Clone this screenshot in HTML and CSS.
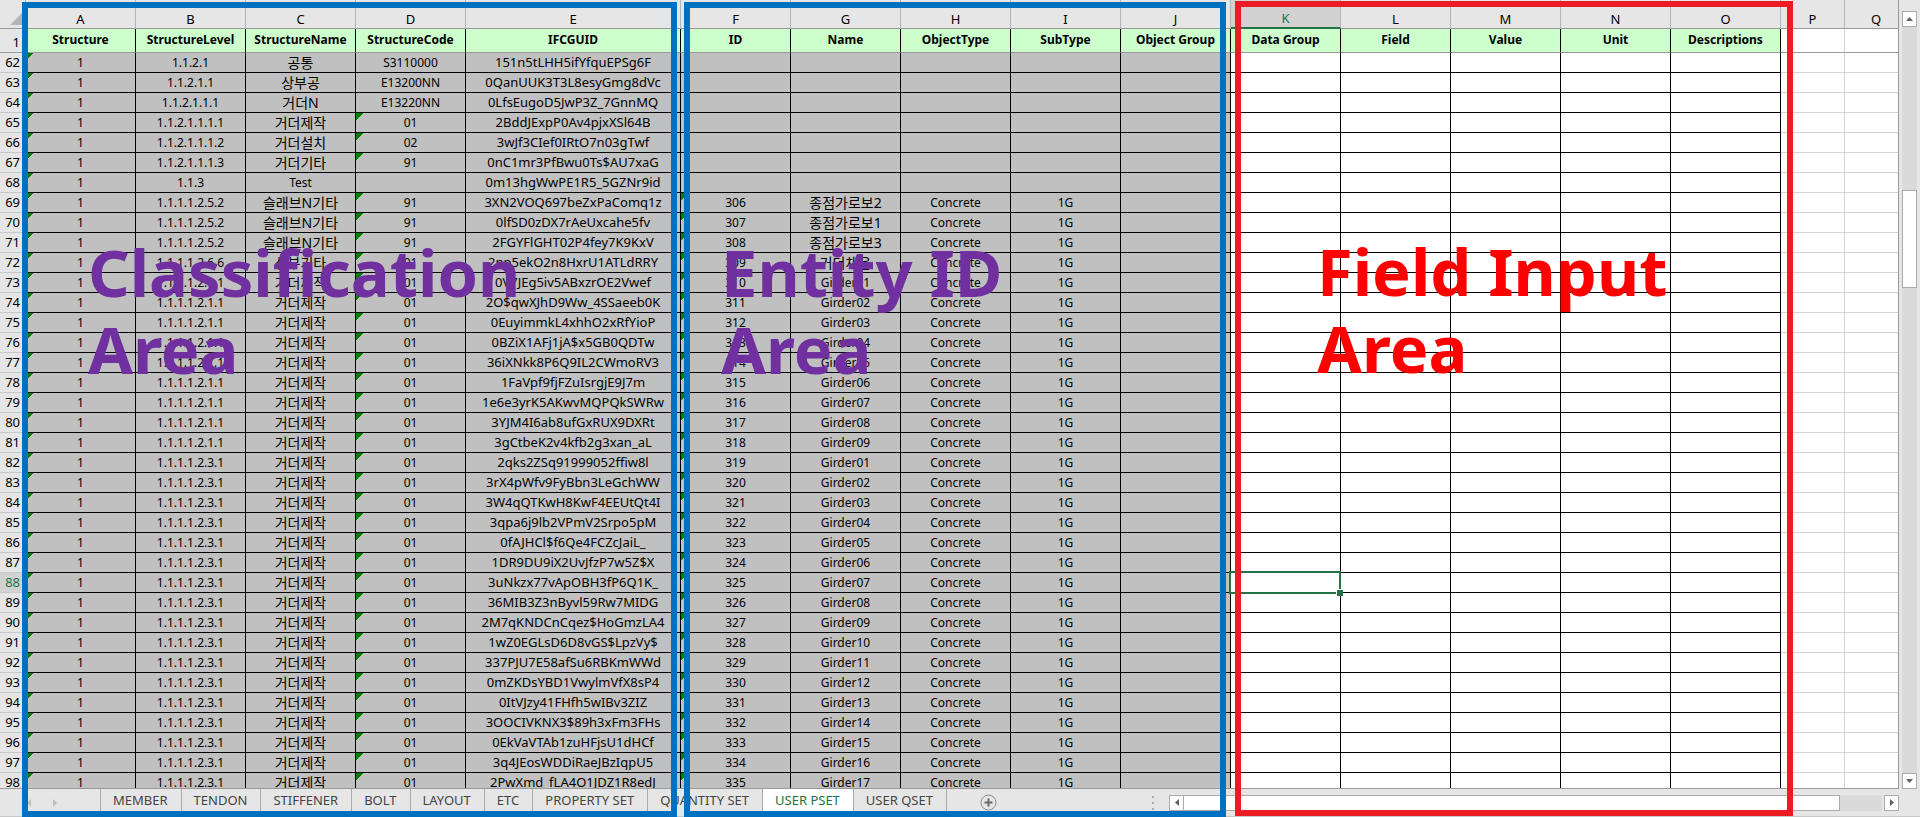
FILE: index.html
```
<!DOCTYPE html>
<html lang="ko">
<head>
    <meta charset="UTF-8">
    <meta name="viewport" content="width=device-width, initial-scale=1.0">
    <title>USER PSET</title>
    <link rel="stylesheet" href="styles.css">
</head>
<body>

<div class="sheet">
    <div class="main">
        <div class="grid-wrap">
            <table class="grid">
                <colgroup id="grid-cols"></colgroup>
                <thead id="grid-head"></thead>
                <tbody id="grid-body"></tbody>
            </table>
        </div>
        <div class="vscroll">
            <button class="scroll-btn" aria-label="Scroll up"><svg width="7" height="4"><path d="M0 4L3.5 0L7 4z"/></svg></button>
            <div class="vtrack"><div class="vthumb"></div></div>
            <button class="scroll-btn" aria-label="Scroll down"><svg width="7" height="4"><path d="M0 0L3.5 4L7 0z"/></svg></button>
        </div>
    </div>

    <div class="bottom-bar">
        <div class="tab-nav">
            <button class="nav-btn" aria-label="Previous sheet"><svg width="4" height="8"><path d="M4 0L0 4L4 8z"/></svg></button>
            <button class="nav-btn" aria-label="Next sheet"><svg width="4" height="8"><path d="M0 0L4 4L0 8z"/></svg></button>
        </div>
        <div class="tabs">
            <button class="tab">MEMBER</button>
            <button class="tab">TENDON</button>
            <button class="tab">STIFFENER</button>
            <button class="tab">BOLT</button>
            <button class="tab">LAYOUT</button>
            <button class="tab">ETC</button>
            <button class="tab">PROPERTY SET</button>
            <button class="tab">QUANTITY SET</button>
            <button class="tab active">USER PSET</button>
            <button class="tab">USER QSET</button>
        </div>
        <button class="add-btn" aria-label="New sheet">
            <svg width="17" height="17" viewBox="0 0 17 17">
                <circle cx="8.5" cy="8.5" r="7.5" fill="none" stroke="#8a8a8a"/>
                <path d="M4.5 7.5h3v-3h2v3h3v2h-3v3h-2v-3h-3z" fill="#6a6a6a"/>
            </svg>
        </button>
        <div class="splitter"><i></i><i></i><i></i></div>
        <div class="hscroll">
            <button class="scroll-btn" aria-label="Scroll left"><svg width="4" height="7"><path d="M4 0L0 3.5L4 7z"/></svg></button>
            <div class="htrack"><div class="hthumb"></div></div>
            <button class="scroll-btn" aria-label="Scroll right"><svg width="4" height="7"><path d="M0 0L4 3.5L0 7z"/></svg></button>
        </div>
    </div>

    <!-- Area callouts -->
    <div class="area area-class">Classification<br>Area</div>
    <div class="area area-entity">Entity ID<br>Area</div>
    <div class="area area-field">Field Input<br>Area</div>
</div>

<script src="script.js"></script>

</body>
</html>
```
FILE: styles.css
```
:root {
    --chrome: #e6e6e6;
    --line: #999999;
    --gridline: #d4d4d4;
    --locked: #c0c0c0;
    --head: #ccffcc;
    --green: #217346;
    --blue: #0070c0;
    --purple: #7030a0;
}
* { box-sizing: border-box; }
body {
    margin: 0;
    background-color: var(--chrome);
    color: #000;
    font-family: "Noto Sans", "Noto Sans CJK KR", sans-serif;
    font-size: 12px;
}
button {
    font: inherit;
    color: inherit;
    padding: 0;
    border: 0;
    background: none;
}
.sheet {
    position: relative;
    display: flex;
    flex-direction: column;
    height: 100vh;
    overflow: hidden;
}
.main {
    display: flex;
    flex: 1;
    min-height: 0;
}

/* Grid */
.grid-wrap {
    flex: 1;
    min-width: 0;
    overflow: hidden;
    background-color: #fff;
    border-right: 1px solid var(--line);
    border-bottom: 1px solid var(--line);
}
.grid {
    width: calc(100% + 10px);
    table-layout: fixed;
    border-collapse: separate;
    border-spacing: 0;
}
.grid th, .grid td {
    height: 20px;
    padding: 0;
    line-height: 19px;
    text-align: center;
    white-space: nowrap;
    overflow: hidden;
    border-right: 1px solid #000;
    border-bottom: 1px solid #000;
}
.grid th { font-weight: normal; }
.grid .letters th {
    height: 29px;
    padding-top: 10px;
    line-height: 17px;
    font-size: 13px;
    background-color: var(--chrome);
    border-right: 1px solid #b4b4b4;
    border-bottom: 1px solid var(--line);
}
.grid .letters .current {
    color: var(--green);
    background-color: #d2d2d2;
    border-bottom: 2px solid var(--green);
}
.grid .corner svg {
    display: block;
    margin-left: 10px;
    fill: #b4b4b4;
}
.grid .names td {
    height: 24px;
    line-height: 21px;
    padding-bottom: 2px;
    font-weight: bold;
    background-color: var(--head);
    border-bottom: 1px solid var(--line);
}
.grid .rownum {
    padding-right: 5px;
    font-size: 13px;
    text-align: right;
    background-color: var(--chrome);
    border-right: 1px solid var(--line);
    border-bottom: 1px solid #c8c8c8;
}
.grid .names .rownum {
    padding-top: 4px;
    border-bottom: 1px solid var(--line);
}
.grid .rownum.current {
    color: var(--green);
    background-color: #d2d2d2;
}
.grid .locked { background-color: var(--locked); }
.grid .guid { font-size: 13px; }
.grid .korean { font-size: 14px; }
.grid .flag {
    background-image: linear-gradient(135deg, #008000 5px, transparent 5px);
}
.grid td.plain, .grid .names td.plain {
    background-color: #fff;
    border-right: 1px solid var(--gridline);
}
.grid td.plain { border-bottom: 1px solid var(--gridline); }
.grid .names td.plain { border-bottom: 1px solid var(--line); }
.grid .selected {
    position: relative;
    overflow: visible;
}
.cursor {
    position: absolute;
    top: -2px;
    right: -1px;
    bottom: -2px;
    left: -2px;
    border: 2px solid var(--green);
}
.cursor::after {
    content: "";
    position: absolute;
    right: -4px;
    bottom: -4px;
    width: 6px;
    height: 6px;
    background-color: var(--green);
    border: 1px solid #fff;
    border-width: 1px 0 0 1px;
}

/* Scroll bars */
.scroll-btn {
    display: flex;
    align-items: center;
    justify-content: center;
    flex: none;
    width: 15px;
    height: 16px;
    background-color: #fff;
    border: 1px solid #ababab;
}
.scroll-btn svg { fill: #606060; }
.vscroll {
    display: flex;
    flex-direction: column;
    width: 21px;
    padding: 11px 3px 0 3px;
}
.vtrack {
    flex: 1;
    width: 15px;
    padding-top: 163px;
    background-color: #dadada;
}
.vthumb {
    height: 98px;
    background-color: #fff;
    border: 1px solid #ababab;
}

/* Sheet tabs */
.bottom-bar {
    display: flex;
    align-items: center;
    height: 28px;
    padding-right: 21px;
    border-bottom: 1px solid #c8c8c8;
}
.tab-nav {
    display: flex;
    gap: 22px;
    width: 100px;
    padding-left: 27px;
}
.nav-btn svg {
    display: block;
    fill: #bdbdbd;
}
.tabs {
    display: flex;
    align-self: stretch;
    border-left: 1px solid #ababab;
}
.tab {
    padding: 0 13px 5px 12px;
    font-size: 13px;
    color: #444;
    border-right: 1px solid #ababab;
}
.tab.active {
    color: var(--green);
    background-color: #fff;
}
.add-btn { margin-left: 33px; }
.add-btn svg { display: block; }
.splitter {
    display: flex;
    flex-direction: column;
    gap: 4px;
    margin-left: auto;
    margin-right: 15px;
}
.splitter i {
    width: 2px;
    height: 2px;
    background-color: #ababab;
}
.hscroll {
    display: flex;
    width: calc(38% + 8px);
}
.htrack {
    flex: 1;
    margin-right: 2px;
    background-color: #dadada;
}
.hthumb {
    width: 94%;
    height: 16px;
    background-color: #fff;
    border: 1px solid #ababab;
    border-left: 0;
}

/* Area callouts */
.area {
    position: absolute;
    top: 2px;
    bottom: 0;
    padding-top: 226px;
    border: 6px solid var(--blue);
    color: var(--purple);
    font-size: 65px;
    font-weight: bold;
    line-height: 77px;
    white-space: nowrap;
    pointer-events: none;
}
.area-class {
    left: 22px;
    width: 655px;
    padding-left: 60px;
}
.area-entity {
    left: 684px;
    width: 542px;
    padding-left: 31px;
}
.area-field {
    top: 1px;
    bottom: 1px;
    left: 1235px;
    width: 558px;
    padding-left: 76px;
    border-color: #ed1c24;
    color: #ff0000;
}
```
FILE: script.js
```
const letters = 'ABCDEFGHIJKLMNOPQ'.split('');
const widths = [26, 110, 110, 110, 110, 215, 110, 110, 110, 110, 110, 110, 110, 110, 110, 110, 64];
const names = ['Structure', 'StructureLevel', 'StructureName', 'StructureCode', 'IFCGUID',
    'ID', 'Name', 'ObjectType', 'SubType', 'Object Group',
    'Data Group', 'Field', 'Value', 'Unit', 'Descriptions', '', ''];
const firstRow = 62;
const currentRow = 88;

// level, name, code, guid, id, entity name
const rows = [
    ['1.1.2.1', '공통', 'S3110000', '151n5tLHH5ifYfquEPSg6F'],
    ['1.1.2.1.1', '상부공', 'E13200NN', '0QanUUK3T3L8esyGmg8dVc'],
    ['1.1.2.1.1.1', '거더N', 'E13220NN', '0LfsEugoD5JwP3Z_7GnnMQ'],
    ['1.1.2.1.1.1.1', '거더제작', '01', '2BddJExpP0Av4pjxXSl64B'],
    ['1.1.2.1.1.1.2', '거더설치', '02', '3wJf3CIef0IRtO7n03gTwf'],
    ['1.1.2.1.1.1.3', '거더기타', '91', '0nC1mr3PfBwu0Ts$AU7xaG'],
    ['1.1.3', 'Test', '', '0m13hgWwPE1R5_5GZNr9id'],
    ['1.1.1.1.2.5.2', '슬래브N기타', '91', '3XN2VOQ697beZxPaComq1z', '306', '종점가로보2'],
    ['1.1.1.1.2.5.2', '슬래브N기타', '91', '0lfSD0zDX7rAeUxcahe5fv', '307', '종점가로보1'],
    ['1.1.1.1.2.5.2', '슬래브N기타', '91', '2FGYFlGHT02P4fey7K9KxV', '308', '종점가로보3'],
    ['1.1.1.1.2.6.6', '상부기타', '91', '2np5ekO2n8HxrU1ATLdRRY', '309', '거더채움'],
    ['1.1.1.1.2.1.1', '거더제작', '01', '0V7JEg5iv5ABxzrOE2Vwef', '310', 'Girder01'],
    ['1.1.1.1.2.1.1', '거더제작', '01', '2O$qwXJhD9Ww_4SSaeeb0K', '311', 'Girder02'],
    ['1.1.1.1.2.1.1', '거더제작', '01', '0EuyimmkL4xhhO2xRfYioP', '312', 'Girder03'],
    ['1.1.1.1.2.1.1', '거더제작', '01', '0BZiX1AFj1jA$x5GB0QDTw', '313', 'Girder04'],
    ['1.1.1.1.2.1.1', '거더제작', '01', '36iXNkk8P6Q9IL2CWmoRV3', '314', 'Girder05'],
    ['1.1.1.1.2.1.1', '거더제작', '01', '1FaVpf9fjFZuIsrgjE9J7m', '315', 'Girder06'],
    ['1.1.1.1.2.1.1', '거더제작', '01', '1e6e3yrK5AKwvMQPQkSWRw', '316', 'Girder07'],
    ['1.1.1.1.2.1.1', '거더제작', '01', '3YJM4I6ab8ufGxRUX9DXRt', '317', 'Girder08'],
    ['1.1.1.1.2.1.1', '거더제작', '01', '3gCtbeK2v4kfb2g3xan_aL', '318', 'Girder09'],
    ['1.1.1.1.2.3.1', '거더제작', '01', '2qks2ZSq91999052ffiw8l', '319', 'Girder01'],
    ['1.1.1.1.2.3.1', '거더제작', '01', '3rX4pWfv9FyBbn3LeGchWW', '320', 'Girder02'],
    ['1.1.1.1.2.3.1', '거더제작', '01', '3W4qQTKwH8KwF4EEUtQt4I', '321', 'Girder03'],
    ['1.1.1.1.2.3.1', '거더제작', '01', '3qpa6j9lb2VPmV2Srpo5pM', '322', 'Girder04'],
    ['1.1.1.1.2.3.1', '거더제작', '01', '0fAJHCl$f6Qe4FCZcJaiL_', '323', 'Girder05'],
    ['1.1.1.1.2.3.1', '거더제작', '01', '1DR9DU9iX2UvJfzP7w5Z$X', '324', 'Girder06'],
    ['1.1.1.1.2.3.1', '거더제작', '01', '3uNkzx77vApOBH3fP6Q1K_', '325', 'Girder07'],
    ['1.1.1.1.2.3.1', '거더제작', '01', '36MIB3Z3nByvl59Rw7MIDG', '326', 'Girder08'],
    ['1.1.1.1.2.3.1', '거더제작', '01', '2M7qKNDCnCqez$HoGmzLA4', '327', 'Girder09'],
    ['1.1.1.1.2.3.1', '거더제작', '01', '1wZ0EGLsD6D8vGS$LpzVy$', '328', 'Girder10'],
    ['1.1.1.1.2.3.1', '거더제작', '01', '337PJU7E58afSu6RBKmWWd', '329', 'Girder11'],
    ['1.1.1.1.2.3.1', '거더제작', '01', '0mZKDsYBD1VwylmVfX8sP4', '330', 'Girder12'],
    ['1.1.1.1.2.3.1', '거더제작', '01', '0ItVJzy41FHfh5wIBv3ZIZ', '331', 'Girder13'],
    ['1.1.1.1.2.3.1', '거더제작', '01', '3OOCIVKNX3$89h3xFm3FHs', '332', 'Girder14'],
    ['1.1.1.1.2.3.1', '거더제작', '01', '0EkVaVTAb1zuHFjsU1dHCf', '333', 'Girder15'],
    ['1.1.1.1.2.3.1', '거더제작', '01', '3q4JEosWDDiRaeJBzIqpU5', '334', 'Girder16'],
    ['1.1.1.1.2.3.1', '거더제작', '01', '2PwXmd_fLA4O1JDZ1R8edJ', '335', 'Girder17']
];

function cellClass(col, text, rowNo) {
    const cls = [];
    if (col < 10) cls.push('locked');
    if (col > 14) cls.push('plain');
    if (col === 4) cls.push('guid');
    if (/[가-힣]/.test(text)) cls.push('korean');
    // numbers stored as text
    if (text && (col === 0 || col === 5 || (col === 3 && text.length === 2))) cls.push('flag');
    if (col === 10 && rowNo === currentRow) cls.push('selected');
    return cls.join(' ');
}

// last column has no width and takes what is left
document.getElementById('grid-cols').innerHTML =
    widths.map(w => `<col style="width: ${w}px">`).join('') + '<col>';

document.getElementById('grid-head').innerHTML = `
    <tr class="letters">
        <th class="corner"><svg width="12" height="12"><path d="M12 0V12H0z"/></svg></th>
        ${letters.map(l => `<th${l === 'K' ? ' class="current"' : ''}>${l}</th>`).join('')}
    </tr>
    <tr class="names">
        <th class="rownum">1</th>
        ${names.map((n, i) => `<td${i > 14 ? ' class="plain"' : ''}>${n}</td>`).join('')}
    </tr>`;

const body = document.getElementById('grid-body');
rows.forEach((row, i) => {
    const rowNo = firstRow + i;
    const [level, name, code, guid, id = '', entity = ''] = row;
    const cells = ['1', level, name, code, guid, id, entity, id && 'Concrete', id && '1G'];
    const tr = document.createElement('tr');
    tr.innerHTML = `<th class="rownum${rowNo === currentRow ? ' current' : ''}">${rowNo}</th>` +
        letters.map((l, col) => {
            const text = cells[col] || '';
            const cls = cellClass(col, text, rowNo);
            const inner = cls.includes('selected') ? '<div class="cursor"></div>' : text;
            return `<td class="${cls}">${inner}</td>`;
        }).join('');
    body.appendChild(tr);
});
```
